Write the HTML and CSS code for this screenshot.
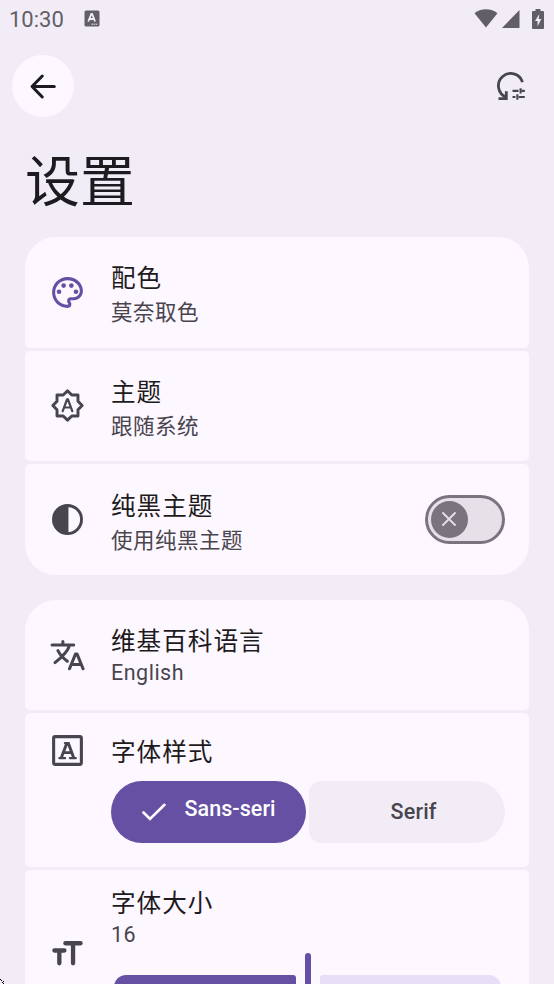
FILE: index.html
```html
<!DOCTYPE html>
<html lang="zh-CN">
<head>
<meta charset="utf-8">
<title>设置</title>
<link rel="stylesheet" href="styles.css">
</head>
<body>
<div class="screen">
  <div class="status">
    <span class="clock">10:30</span>
    <svg class="status-app" viewBox="0 0 16 17"><rect x="0.5" y="0.5" width="15" height="16" rx="1.5" fill="#625e66"/><path d="M4.300 11.500 7.300 4h.8l3 7.500M5.500 9h4.400" fill="none" stroke="#f2ecf6" stroke-width="1.800"/><path d="M7.500 14.200h6" stroke="#f2ecf6" stroke-width="1" stroke-dasharray="1.500 .6"/></svg>
    <span class="spacer"></span>
    <svg class="wifi" viewBox="0 0 24 19"><path d="M12 18.500 .5 4.200C3.500 1.600 7.500.200 12 .200s8.500 1.400 11.500 4z" fill="#625e66"/></svg>
    <svg class="signal" viewBox="0 0 18 18"><path d="M17.500 0v18H0z" fill="#625e66"/></svg>
    <svg class="battery" viewBox="0 0 12 20"><path d="M3.500 0h5v2H11q1 0 1 1v16q0 1-1 1H1q-1 0-1-1V3q0-1 1-1h2.500z" fill="#625e66"/><path d="M7.300 5 3 12h2.600v5.200L9.300 10H6.700z" fill="#f2ecf6"/></svg>
  </div>

  <header class="toolbar">
    <button class="back" aria-label="返回"><svg viewBox="0 0 24 24"><path d="M19 12H5M11.200 5.200 4.600 12l6.600 6.800" fill="none" stroke="#1d1b20" stroke-width="2" stroke-linecap="round" stroke-linejoin="round"/></svg></button>
    <svg class="reset" viewBox="0 0 28 28"><g fill="none" stroke="#49454e"><path d="M25.500 10.200A12.300 12.300 0 1 0 9.200 25.200" stroke-width="2.800"/><path d="M1.500 26.700h7.800v-7.500" stroke-width="2.800"/><path d="M15.500 18.900h6M24.800 18.900h3M23.600 16.200v5.400M15.500 25h3M21.800 25h6M20.400 22.300v5.400" stroke-width="2.100"/></g></svg>
  </header>

  <h1>设置</h1>

  <main>
    <section class="group">
      <div class="card">
        <svg class="icon accent" viewBox="0 0 24 24"><path d="M12 22C6.490 22 2 17.510 2 12S6.490 2 12 2s10 4.040 10 9c0 3.310-2.690 6-6 6h-1.770c-.28 0-.5.220-.5.500 0 .120.050.230.130.330.410.470.640 1.060.640 1.670A2.500 2.500 0 0 1 12 22zm0-18c-4.410 0-8 3.590-8 8s3.590 8 8 8c.28 0 .5-.22.500-.5a.54.540 0 0 0-.14-.35c-.41-.46-.63-1.050-.63-1.650a2.500 2.500 0 0 1 2.500-2.500H16c2.210 0 4-1.790 4-4 0-3.860-3.590-7-8-7z"/><circle cx="6.500" cy="11.500" r="1.500"/><circle cx="9.500" cy="7.500" r="1.500"/><circle cx="14.500" cy="7.500" r="1.500"/><circle cx="17.500" cy="11.500" r="1.500"/></svg>
        <div class="text"><div class="title">配色</div><div class="sub">莫奈取色</div></div>
      </div>
      <div class="card">
        <svg class="icon" viewBox="0 0 24 24"><g fill="none" stroke="currentColor" stroke-linejoin="round" stroke-linecap="round"><path d="M12 2.500 14.800 5.200h4v4L21.500 12l-2.700 2.800v4h-4L12 21.500l-2.800-2.700h-4v-4L2.500 12l2.700-2.800v-4h4z" stroke-width="1.900"/><path d="M8.900 15.700 11.700 8h.6l2.800 7.700M9.900 13.300h4.200" stroke-width="1.450"/></g></svg>
        <div class="text"><div class="title">主题</div><div class="sub">跟随系统</div></div>
      </div>
      <div class="card">
        <svg class="icon" viewBox="0 0 24 24"><circle cx="12" cy="12" r="9.100" fill="none" stroke="currentColor" stroke-width="1.900"/><path d="M12.600 2.500V21.500A9.500 9.500 0 0 1 12.600 2.500z"/></svg>
        <div class="text"><div class="title">纯黑主题</div><div class="sub">使用纯黑主题</div></div>
        <div class="switch"><div class="thumb"><svg viewBox="0 0 14 14"><path d="M1 1l12 12M13 1 1 13" stroke="#e6e0e9" stroke-width="1.800" stroke-linecap="round"/></svg></div></div>
      </div>
    </section>

    <section class="group">
      <div class="card">
        <svg class="icon" viewBox="0 0 24 24"><g fill="none" stroke="currentColor" stroke-width="2" stroke-linecap="round" stroke-linejoin="round"><path d="M2 5.200h14M9 3v2M13.300 5.400C12.300 9.200 8.800 12.700 3.900 16.600M5.800 8.800c1.400 2.900 3.600 5 6.100 6.900"/><path d="M13.300 20.600 17.200 11h1l3.900 9.600M14.700 17.800h6"/></g></svg>
        <div class="text"><div class="title">维基百科语言</div><div class="sub latin">English</div></div>
      </div>
      <div class="card font-style">
        <svg class="icon" viewBox="0 0 24 24"><g fill="none" stroke="currentColor"><rect x="3" y="3" width="18" height="18" rx="1" stroke-width="2"/><path d="M8.100 16.400 11.500 7.500h1.100l3.300 8.900M9.300 13.400h5.400" stroke-width="1.900"/><path d="M6.700 16.900h3.800M13.500 16.900h3.900M10.300 7.200h2" stroke-width="1.400" stroke-linecap="round"/></g></svg>
        <div class="text">
          <div class="title">字体样式</div>
          <div class="segments">
            <button class="seg on"><svg viewBox="0 0 24 18"><path d="M1.500 9.500 8 16 22.500 1.800" fill="none" stroke="#fff" stroke-width="2.600" stroke-linecap="round"/></svg><span>Sans-seri</span></button>
            <button class="seg">Serif</button>
          </div>
        </div>
      </div>
      <div class="card font-size">
        <svg class="icon" viewBox="0 0 24 24"><path d="M3.500 9.400h6.500M6.700 9.400v8.300M10.600 4.700h9.900M15.600 4.700v13" fill="none" stroke="currentColor" stroke-width="2.800" stroke-linecap="round"/></svg>
        <div class="text">
          <div class="title">字体大小</div>
          <div class="sub latin">16</div>
          <div class="slider"><div class="active"></div><div class="handle"></div><div class="rest"></div></div>
        </div>
      </div>
    </section>
  </main>
  <svg class="corner" viewBox="0 0 5 5"><path d="M0 0h1v1H0zM1 1h1v1H1zM3 2h1v1H3zM2 3h1v1H2zM3 4h1v1H3z"/></svg>
</div>
</body>
</html>
```

FILE: styles.css
```css
* { box-sizing: border-box; }
body {
  margin: 0;
  background: #f2ecf6;
  color: #1d1b20;
  font-family: Roboto, "Noto Sans CJK SC", sans-serif;
}
button { border: 0; padding: 0; font: inherit; color: inherit; }
svg { display: block; flex: none; }
.screen { position: relative; width: 554px; height: 984px; overflow: hidden; }

.status { display: flex; align-items: center; height: 37px; padding: 0 10px 0 9px; }
.clock { width: 75px; font-size: 22px; line-height: 37px; padding-top: 2px; color: #625e66; }
.status-app { width: 16px; height: 17px; }
.spacer { flex: 1; }
.wifi { width: 24px; height: 19px; margin-right: 4px; }
.signal { width: 18px; height: 18px; margin-right: 12px; }
.battery { width: 12px; height: 20px; }

.toolbar { display: flex; align-items: center; justify-content: space-between; height: 98px; padding: 0 29px 0 12px; }
.back { display: grid; place-items: center; width: 62px; height: 62px; border-radius: 50%; background: #fdf7ff; }
.back svg { width: 37px; height: 37px; }
.reset { width: 28px; height: 28px; }

h1 { margin: 0; padding: 8px 25px 0; height: 102px; font-size: 55px; line-height: 78px; font-weight: 400; }

main { display: flex; flex-direction: column; gap: 25px; padding: 0 25px; }
.group { display: flex; flex-direction: column; gap: 3px; }
.card {
  display: flex;
  align-items: center;
  gap: 25px;
  height: 110.6px;
  padding: 0 24px;
  border-radius: 5px;
  background: #fdf7ff;
}
.card:first-child { border-top-left-radius: 31px; border-top-right-radius: 31px; }
.group:first-child .card:last-child { border-bottom-left-radius: 31px; border-bottom-right-radius: 31px; }
.icon { width: 37px; height: 37px; color: #49454e; fill: currentColor; }
.accent { color: #6550a4; }
.text { flex: 1; padding-top: 6.4px; }
.title { font-size: 24.6px; line-height: 35px; letter-spacing: 1px; }
.sub { font-size: 21.5px; line-height: 33px; letter-spacing: .5px; color: #49454e; }
.latin { line-height: 27px; padding-bottom: 6px; }

.switch { width: 80px; height: 49px; padding: 3px; border: 3px solid #79747e; border-radius: 25px; background: #e6e0e9; }
.thumb { display: grid; place-items: center; width: 37px; height: 37px; border-radius: 50%; background: #79747e; }
.thumb svg { width: 14px; height: 14px; margin-left: -1px; }

.font-style { align-items: flex-start; height: 154px; padding-top: 19px; }
.font-style .text { padding-top: 3px; }
.font-style .title { height: 46px; }
.segments { display: flex; gap: 3px; }
.seg {
  display: flex;
  align-items: center;
  justify-content: center;
  width: 195.4px;
  height: 61.5px;
  padding-left: 13px;
  padding-bottom: 1px;
  border-radius: 12px 31px 31px 12px;
  background: #f2ecf6;
  color: #49454e;
  font-size: 21.5px;
  font-weight: 500;
  letter-spacing: .15px;
}
.seg.on { justify-content: flex-start; padding-left: 31px; gap: 18.5px; border-radius: 31px; background: #6550a4; color: #fff; }
.seg.on svg { width: 24px; height: 18px; }
.seg.on span { padding-bottom: 6px; letter-spacing: .05px; }

.font-size { height: 168px; border-radius: 5px 5px 0 0; }
.font-size .text { align-self: flex-start; padding-top: 16px; }
.slider { display: flex; height: 68px; margin-top: -1px; }
.active { width: 182px; height: 25px; margin: 22px 0 0 3px; border-radius: 12px 3px 3px 12px; background: #6550a4; }
.handle { width: 6px; height: 68px; margin: 0 9px; border-radius: 3px; background: #6550a4; }
.rest { width: 181px; height: 25px; margin-top: 22px; border-radius: 3px 12px 12px 3px; background: #e8def8; }

.corner { position: absolute; left: 0; bottom: 0; width: 5px; height: 5px; }
```
